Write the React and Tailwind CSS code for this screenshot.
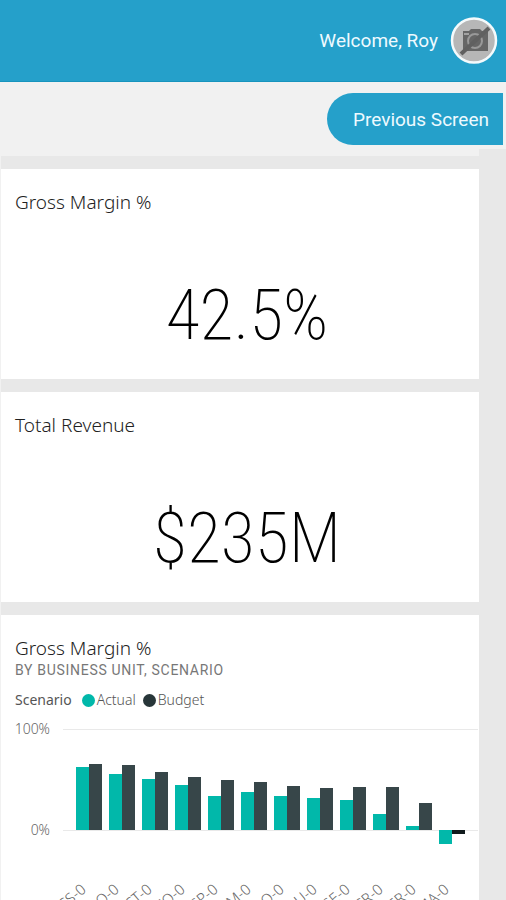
import React from "react";

const units = [
  { name: "CS-0", actual: 63, budget: 66 },
  { name: "LO-0", actual: 56, budget: 65 },
  { name: "CT-0", actual: 51, budget: 58 },
  { name: "FO-0", actual: 45, budget: 53 },
  { name: "SP-0", actual: 34, budget: 50 },
  { name: "FM-0", actual: 38, budget: 48 },
  { name: "PO-0", actual: 34, budget: 44 },
  { name: "PU-0", actual: 32, budget: 42 },
  { name: "SE-0", actual: 30, budget: 43 },
  { name: "CR-0", actual: 16, budget: 43 },
  { name: "ER-0", actual: 4, budget: 27 },
  { name: "MA-0", actual: -14, budget: -4 },
];

const ZERO = 111;

function Bar({ x, value, color }) {
  return (
    <rect x={x} y={value > 0 ? ZERO - value : ZERO} width={13} height={Math.abs(value)} fill={color} />
  );
}

function CategoryLabel({ x, children }) {
  return (
    <text
      x={x}
      y={172}
      transform={`rotate(-40 ${x} 172)`}
      textAnchor="end"
      className="fill-[#666666] text-[15px] font-light"
    >
      {children}
    </text>
  );
}

function MarginChart() {
  return (
    <svg viewBox="0 0 478 220" className="block w-full" role="img" aria-label="Gross margin by business unit">
      <path d="M62 10.500H477M62 111.500H477" stroke="#e9e9e9" />
      <text x={49} y={15} textAnchor="end" className="fill-[#666666] text-[14px] font-light">100%</text>
      <text x={49} y={116} textAnchor="end" className="fill-[#666666] text-[14px] font-light">0%</text>
      {units.map((u, i) => (
        <g key={u.name}>
          <Bar x={75 + i * 33} value={u.actual} color="#01b8aa" />
          <Bar x={88 + i * 33} value={u.budget} color={u.budget > 0 ? "#374649" : "#101a1c"} />
          <CategoryLabel x={86 + i * 33}>{u.name}</CategoryLabel>
        </g>
      ))}
    </svg>
  );
}

function Metric({ title, value }) {
  return (
    <section className="flex h-[210px] flex-col bg-white px-[14px] pt-[19px]">
      <h2 className="text-[19px] leading-7 font-light text-[#222222]">{title}</h2>
      <p className="pt-[55px] pl-[14px] text-center font-['Roboto_Condensed','Roboto',sans-serif] text-[70px] leading-[88px] font-extralight text-black">
        {value}
      </p>
    </section>
  );
}

function NoPhoto() {
  return (
    <svg viewBox="0 0 48 48" className="size-12" role="img" aria-label="No profile photo">
      <circle cx="24" cy="23.500" r="22" fill="#b7b7b7" stroke="#f4fafc" strokeWidth="2.500" />
      <path d="M13 14H19L21 12H30L32 14H38V34H13Z" fill="#666666" />
      <path d="M14 17H19" stroke="#b7b7b7" strokeWidth="1.500" />
      <circle cx="25" cy="24" r="7" fill="#666666" stroke="#999999" strokeWidth="2" />
      <path d="M22 27 28 21" stroke="#8c8c8c" strokeWidth="2" />
      <path d="M11 37 39 11" stroke="#606060" strokeWidth="4" />
    </svg>
  );
}

export default function App() {
  return (
    <div className="flex h-screen flex-col overflow-hidden bg-[#e8e8e8] font-['Noto_Sans',sans-serif]">
      <header className="flex h-[82px] shrink-0 items-center justify-end gap-3 border-b border-[#1794bd] bg-[#25a0ca] pr-2 font-['Roboto',sans-serif] text-[19px] text-[#eefaff]">
        <span className="pt-[2px]">Welcome, Roy</span>
        <NoPhoto />
      </header>
      <div className="flex h-[67px] shrink-0 items-start justify-end bg-[#f1f1f1] pt-[11px] pr-[3px]">
        <button
          type="button"
          className="h-[52px] rounded-l-full bg-[#25a0ca] pt-[2px] pr-[14px] pl-[26px] font-['Roboto',sans-serif] text-[19px] text-[#eefaff]"
        >
          Previous Screen
        </button>
      </div>
      <main className="pr-[27px]">
        <div className="h-[7px] bg-[#f1f1f1]" />
        <div className="flex flex-col gap-[13px] border-l border-[#f1f1f1] pt-[13px]">
          <Metric title="Gross Margin %" value="42.5%" />
          <Metric title="Total Revenue" value="$235M" />
          <section className="bg-white pt-[19px]">
            <div className="px-[14px] pb-[9px]">
              <h2 className="text-[19px] leading-7 font-light text-[#222222]">Gross Margin %</h2>
              <p className="font-['Roboto',sans-serif] text-[14px] leading-4 tracking-wider text-[#777777]">
                BY BUSINESS UNIT, SCENARIO
              </p>
              <div className="flex items-center pt-3 text-[14px] leading-5 text-[#555555]">
                <span className="pr-[10px]">Scenario</span>
                <span className="mr-[2px] size-[13px] rounded-full bg-[#01b8aa]" />
                <span className="pr-[7px] font-light">Actual</span>
                <span className="mr-[2px] size-[13px] rounded-full bg-[#273639]" />
                <span className="font-light">Budget</span>
              </div>
            </div>
            <MarginChart />
          </section>
        </div>
      </main>
    </div>
  );
}
